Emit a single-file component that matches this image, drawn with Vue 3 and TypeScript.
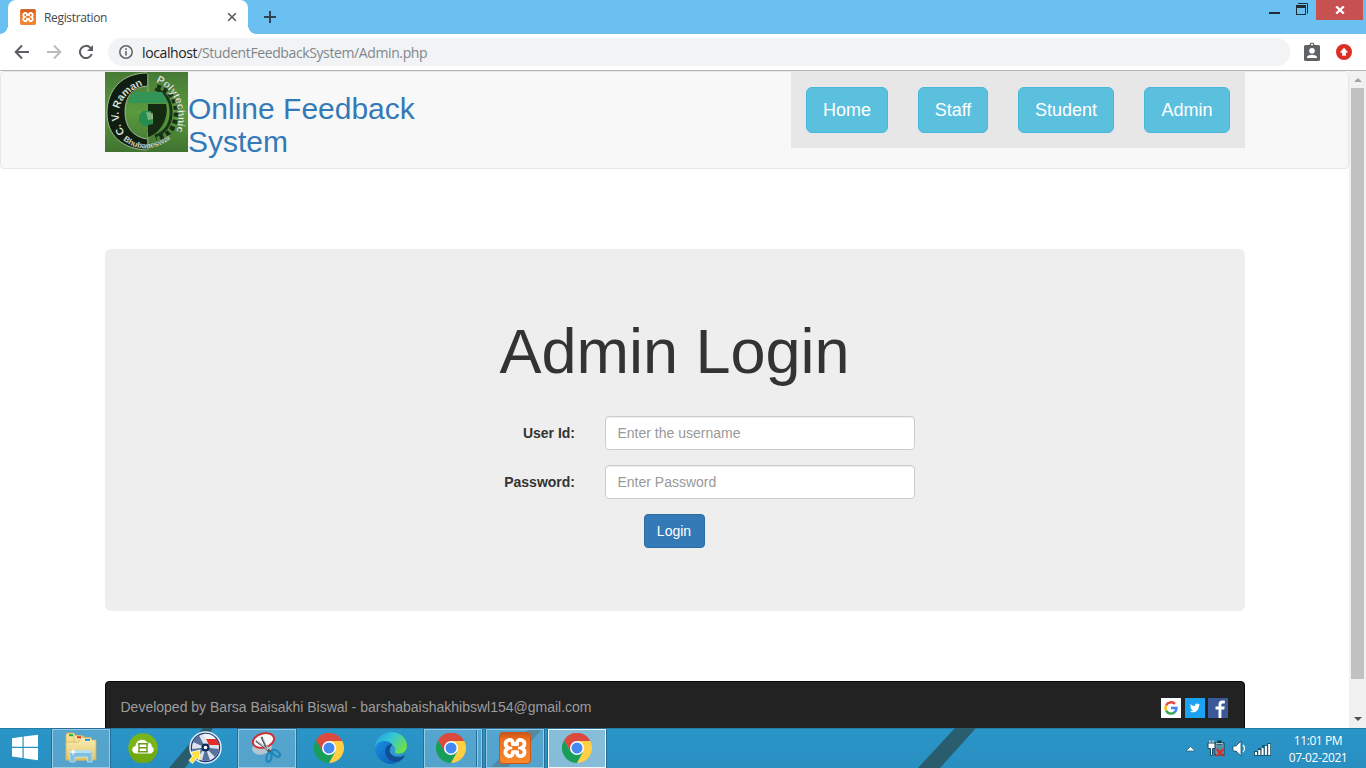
<script setup lang="ts">
interface NavItem { label: string; width: number }

const navItems: NavItem[] = [
  { label: 'Home', width: 82 },
  { label: 'Staff', width: 70 },
  { label: 'Student', width: 96 },
  { label: 'Admin', width: 86 },
]

interface TaskItem { icon: string; state: string }

const tasks: TaskItem[] = [
  { icon: 'folder', state: 'open' },
  { icon: 'cloud', state: '' },
  { icon: 'disc', state: '' },
  { icon: 'snip', state: 'open' },
  { icon: 'chrome', state: '' },
  { icon: 'edge', state: '' },
  { icon: 'chrome', state: 'open stacked' },
  { icon: 'xampp', state: 'open' },
  { icon: 'chrome', state: 'active' },
]
</script>

<template>
  <div class="screen">
    <svg class="defs" width="0" height="0">
      <defs>
        <linearGradient id="orange" x1="0" y1="0" x2="0" y2="1">
          <stop offset="0" stop-color="#c9551c" />
          <stop offset="0.25" stop-color="#f0701c" />
          <stop offset="1" stop-color="#f88a2c" />
        </linearGradient>
        <linearGradient id="paper" x1="0" y1="0" x2="0" y2="1">
          <stop offset="0" stop-color="#fbeeb4" />
          <stop offset="1" stop-color="#e5c566" />
        </linearGradient>
        <linearGradient id="edgeTop" x1="0" y1="0" x2="1" y2="0.6">
          <stop offset="0" stop-color="#1b9de2" />
          <stop offset="0.5" stop-color="#35c7d6" />
          <stop offset="1" stop-color="#6be04a" />
        </linearGradient>
        <linearGradient id="edgeLow" x1="0" y1="0" x2="1" y2="1">
          <stop offset="0" stop-color="#1a8fe0" />
          <stop offset="1" stop-color="#0a5cb8" />
        </linearGradient>
        <symbol id="xmark" viewBox="0 0 32 32">
          <rect x="0.5" y="0.5" width="31" height="31" rx="3.5" fill="url(#orange)" stroke="#c8561c" />
          <path d="M9.2 8.2C12.5 7.2 14.3 9 13.8 12.2H18.2C17.7 9 19.5 7.2 22.8 8.2 26.6 9.8 26.2 14.4 22.5 16 26.6 17.6 26.6 22.4 22.8 24 19.5 24.8 17.8 23 18.2 20H13.8C14.2 23 12.5 24.8 9.2 24 5.4 22.4 5.4 17.6 9.5 16 5.8 14.4 5.4 9.8 9.2 8.2z" fill="none" stroke="#fff" stroke-width="3.7" stroke-linejoin="round" />
          <path d="M9 16H13.2M19 16H23" stroke="#fff" stroke-width="2.4" />
        </symbol>
        <symbol id="chromemark" viewBox="0 0 30 30">
          <path d="M15 15 2 7.5A15 15 0 0 1 28 7.5L28 8H15z" fill="#dc4a3d" />
          <path d="M15 0A15 15 0 0 0 2 7.5L8.8 18.7 15 15V8h13A15 15 0 0 0 15 0z" fill="#dc4a3d" />
          <path d="M2 7.5A15 15 0 0 0 15 30L21.4 18.8 15 15 8.7 18.5z" fill="#199e5a" />
          <path d="M28.3 8H15l6.2 10.7L15 30A15 15 0 0 0 28.3 8z" fill="#ffcf44" />
          <circle cx="15" cy="15" r="7" fill="#fff" />
          <circle cx="15" cy="15" r="5.5" fill="#4688f1" />
        </symbol>
      </defs>
    </svg>

    <header class="tabstrip">
      <div class="tab">
        <svg class="favicon" width="16" height="16"><use href="#xmark" /></svg>
        <span class="tab-title">Registration</span>
        <svg class="tab-close" width="10" height="10" viewBox="0 0 10 10"><path d="M1.2 1.2 8.8 8.8M8.8 1.2 1.2 8.8" stroke="#56595d" stroke-width="1.6" /></svg>
      </div>
      <svg class="new-tab" width="12" height="12" viewBox="0 0 12 12"><path d="M6 0V12M0 6H12" stroke="#34424f" stroke-width="2" /></svg>
      <div class="win-controls">
        <svg width="42" height="20" viewBox="0 0 42 20">
          <path d="M2 13H13" stroke="#222b33" stroke-width="2" />
          <path d="M31 3.5H40.5V13.5" stroke="#222b33" fill="none" />
          <rect x="29.5" y="5.5" width="9" height="9" fill="none" stroke="#222b33" />
          <path d="M29 6.5H39" stroke="#222b33" stroke-width="3" />
        </svg>
        <div class="win-close">
          <svg width="10" height="8" viewBox="0 0 10 8"><path d="M1.2 .4 8.8 7.6M8.8 .4 1.2 7.6" stroke="#fff" stroke-width="2.2" /></svg>
        </div>
      </div>
    </header>

    <div class="toolbar">
      <svg class="tool" width="16" height="16" viewBox="0 0 16 16"><path d="M15 8H2M8 1.5 1.7 8 8 14.5" fill="none" stroke="#5b5e63" stroke-width="2" /></svg>
      <svg class="tool" width="16" height="16" viewBox="0 0 16 16"><path d="M1 8H14M8 1.5 14.3 8 8 14.5" fill="none" stroke="#b9bbbe" stroke-width="2" /></svg>
      <svg class="tool" width="16" height="16" viewBox="0 0 16 16"><path d="M13.8 10A6.1 6.1 0 1 1 12.4 3.7L14 5.3" fill="none" stroke="#5b5e63" stroke-width="2" /><path d="M15 1V7H9z" fill="#5b5e63" /></svg>
      <div class="omnibox">
        <svg width="14" height="14" viewBox="0 0 14 14"><circle cx="7" cy="7" r="6.2" fill="none" stroke="#5f6368" stroke-width="1.5" /><path d="M7 6V10.5M7 3.3V4.9" stroke="#5f6368" stroke-width="1.6" /></svg>
        <span class="url"><b>localhost</b>/StudentFeedbackSystem/Admin.php</span>
      </div>
      <svg class="badge" width="16" height="20" viewBox="0 0 16 20">
        <path d="M1.5 3H5.5C5.8-.3 10.2-.3 10.5 3H14.5Q16 3 16 4.5V17.5Q16 19 14.5 19H1.5Q0 19 0 17.5V4.5Q0 3 1.5 3z" fill="#5f6368" />
        <circle cx="8" cy="2.6" r="1" fill="#fff" /><circle cx="8" cy="8.7" r="2.8" fill="#fff" />
        <path d="M3 16V14.7Q4.2 12.7 8 12.7T13 14.7V16z" fill="#fff" />
      </svg>
      <svg class="update" width="16" height="16" viewBox="0 0 16 16"><circle cx="8" cy="8" r="8" fill="#d93025" /><path d="M8 3.7 12.2 8.4H9.9V11.8H6.1V8.4H3.8z" fill="#fff" /></svg>
    </div>

    <div class="viewport">
      <main class="page">
        <nav class="navbar">
          <div class="brand">
            <svg class="crest" width="83" height="80" viewBox="0 0 83 80">
              <defs>
                <path id="arcLeft" d="M20 61C8 44 12 22 41 12" />
                <path id="arcRight" d="M51 10C68 16 79 38 70 63" />
                <path id="arcBottom" d="M18 68Q42 87 71 63" />
                <linearGradient id="grass" x1="0" y1="0" x2="0" y2="1"><stop offset="0" stop-color="#467a35" /><stop offset="0.5" stop-color="#5b9a3e" /><stop offset="1" stop-color="#3f7330" /></linearGradient>
              </defs>
              <rect width="83" height="80" fill="url(#grass)" />
              <path d="M42 1C17 1 2 18 2 41S18 77 42 78V67C28 65 20 55 20 40S29 15 42 14z" fill="#101d11" />
              <path d="M42 1C17 1 2 18 2 41S18 77 42 78" fill="none" stroke="#a1bc91" />
              <path d="M42 14C27 15 20 25 20 40S28 65 42 67" fill="none" stroke="#b8cbae" stroke-width=".8" />
              <path d="M43 2V20M43 61V78" stroke="#a8bf96" stroke-width=".7" />
              <path d="M52 15C64 17 73 29 71 44S62 64 51 66" fill="none" stroke="#1a3013" stroke-width="5" stroke-dasharray="4 3" />
              <path d="M50 17C62 21 67 31 66 43S59 61 50 64" fill="none" stroke="#183317" stroke-width="3" />
              <path d="M23 31Q25 25 29 20H57Q61 25 63 31z" fill="#329457" />
              <path d="M43 32H61C64 43 58 60 43 65z" fill="#142b11" />
              <path d="M43 43H48V52H43z" fill="#6b983e" />
              <path d="M34 43 38 39H46L48 52 39 54 34 50z" fill="#268d52" />
              <path d="M41 40 48 41 48 47 43 48z" fill="#b6c8a0" opacity=".6" />
              <text class="crest-text large"><textPath href="#arcLeft">C. V. Raman</textPath></text>
              <text class="crest-text right"><textPath href="#arcRight">Polytechnic</textPath></text>
              <text class="crest-text small"><textPath href="#arcBottom">Bhubaneswar</textPath></text>
            </svg>
            <h2>Online Feedback<br />System</h2>
          </div>
          <div class="menu">
            <button v-for="item in navItems" :key="item.label" type="button" :style="{ width: item.width + 'px' }">{{ item.label }}</button>
          </div>
        </nav>

        <section class="jumbotron">
          <h1>Admin Login</h1>
          <form @submit.prevent>
            <div class="row"><label for="user">User Id:</label><input id="user" type="text" placeholder="Enter the username" /></div>
            <div class="row"><label for="pass">Password:</label><input id="pass" type="password" placeholder="Enter Password" /></div>
            <button class="login" type="submit">Login</button>
          </form>
        </section>

        <footer class="footer">
          <p>Developed by Barsa Baisakhi Biswal - barshabaishakhibswl154@gmail.com</p>
          <div class="social">
            <svg width="20" height="20" viewBox="0 0 20 20"><rect width="20" height="20" fill="#fff" />
              <path d="M5.1 7.4A5.6 5.6 0 0 1 14 5.8" fill="none" stroke="#ea4335" stroke-width="2.4" />
              <path d="M5.1 7.4A5.6 5.6 0 0 0 5.1 12.6" fill="none" stroke="#fbbc05" stroke-width="2.4" />
              <path d="M5.1 12.6A5.6 5.6 0 0 0 13.6 14.3" fill="none" stroke="#34a853" stroke-width="2.4" />
              <path d="M10 10H15.5A5.6 5.6 0 0 1 13.6 14.3" fill="none" stroke="#4285f4" stroke-width="2.4" />
            </svg>
            <svg class="bird" width="20" height="20" viewBox="0 0 20 20"><rect width="20" height="20" fill="#1da1f2" /><path d="M15 6.9 13.9 7.9C13.9 12.7 9.1 16.1 5 13.4 6.5 13.5 7.4 13.1 8.1 12.5 7 12.4 6.4 11.8 6.1 11H7C5.9 10.5 5.4 9.6 5.4 8.6L6.3 8.8C5.3 8 5.2 6.9 5.7 5.9 6.9 7.2 8.2 8 9.9 8.1 9.5 5.8 11.9 4.8 13.3 6.2L14.7 5.7 14 6.8z" fill="#fff" /></svg>
            <svg width="20" height="20" viewBox="0 0 20 20"><rect width="20" height="20" fill="#3b5998" /><path d="M10.5 20V11.6H7.5V8.4H10.5V6.3C10.5 3.8 12 2.5 14.3 2.5H16.8V5.5H15C13.7 5.5 13.4 6.1 13.4 7V8.4H16.7L16.2 11.6H13.4V20z" fill="#fff" /></svg>
          </div>
        </footer>
      </main>
      <div class="scrollbar">
        <svg width="17" height="17" viewBox="0 0 17 17"><path d="M5 11 9 7 13 11z" fill="#a3a3a3" /></svg>
        <div class="thumb"></div>
        <svg width="17" height="17" viewBox="0 0 17 17"><path d="M5 6 9 10 13 6z" fill="#505050" /></svg>
      </div>
    </div>

    <div class="taskbar">
      <svg class="stripes" width="1366" height="40" viewBox="0 0 1366 40"><path d="M203 0H213L185 40H169zM530 0H543L507 40H490zM955 0H976L940 40H918z" fill="#295864" opacity=".9" /></svg>
      <div class="start">
        <svg width="28" height="27" viewBox="0 0 28 27"><path d="M1 4.2 11.5 2.8V12.8H1zM12.7 2.6 27 .7V12.8H12.7zM1 14H11.5V24L1 22.5zM12.7 14H27V26.3L12.7 24.2z" fill="#fff" /></svg>
      </div>
      <div v-for="(task, i) in tasks" :key="i" class="task" :class="task.state">
        <svg v-if="task.icon === 'folder'" width="34" height="32" viewBox="0 0 34 32">
          <path d="M2 3Q2 1 4 1H10L12 4H20V28H2z" fill="#f6df92" stroke="#cfae58" stroke-width=".8" />
          <rect x="5" y="2.2" width="4" height="2" fill="#18ae43" />
          <path d="M10 3.5H17L19 5.5H27V28H10z" fill="#f7e29a" stroke="#d6ba6c" stroke-width=".8" />
          <rect x="13" y="4.2" width="4" height="2" fill="#db3b31" />
          <path d="M18 5.5H26L28 8H32V27Q32 28 31 28H3Q2 28 2 27V11Q2 10 3 10H14z" fill="url(#paper)" stroke="#ccb164" stroke-width=".8" />
          <rect x="21" y="6.8" width="5" height="2" fill="#258be8" />
          <path d="M6 30V20.5Q6 18.5 8 18.5H26Q28 18.5 28 20.5V30H23.5V25H11V30z" fill="#7fc0e2" stroke="#b9e2f2" stroke-width=".8" />
          <path d="M7 20H27" stroke="#c5ecfa" stroke-width="1.5" />
          <path d="M9 16 9.8 19.2 13 20 9.8 20.8 9 24 8.2 20.8 5 20 8.2 19.2z" fill="#fff" />
        </svg>
        <svg v-else-if="task.icon === 'cloud'" width="30" height="30" viewBox="0 0 30 30">
          <circle cx="15" cy="15" r="14.8" fill="#79b518" /><path d="M1 17A14 14 0 0 0 29 17Q15 24 1 17z" fill="#6ba40e" opacity=".6" />
          <path d="M8.5 20.5C3 20.5 3 13.5 7.6 13 8 6.3 16.5 4.7 19.5 9.7 23 9.5 24 11.8 23.6 13.6 27 15.3 26 20.5 22.2 20.5z" fill="#fff" />
          <path d="M11 10.8H19V18.7H11zM11 14.7H19M9.8 10.8H20.2M9.8 18.7H20.2" fill="none" stroke="#6f9a1c" stroke-width="1.4" />
        </svg>
        <svg v-else-if="task.icon === 'disc'" width="34" height="34" viewBox="0 0 34 34">
          <circle cx="17.5" cy="16.5" r="15.5" fill="#173d7b" stroke="#e5ebf2" stroke-width="1.5" />
          <circle cx="17.5" cy="16.5" r="13.5" fill="#dde3eb" />
          <path d="M17.5 16.5 5 11A13.5 13.5 0 0 1 11 4.6zM17.5 16.5 4 18A13.5 13.5 0 0 0 9 27zM17.5 16.5 14 29.5A13.5 13.5 0 0 0 22 29.2zM17.5 16.5 27 26A13.5 13.5 0 0 0 31 18z" fill="#56729d" />
          <path d="M18 8H28Q31 11 31 14H21z" fill="#e42c28" /><path d="M15 3A14 14 0 0 1 28 8H18z" fill="#f2f4f7" />
          <circle cx="17.5" cy="16.5" r="4" fill="#102a56" /><circle cx="17.5" cy="16.5" r="1.8" fill="#fff" />
          <path d="M12 19 2.5 21.3 5.5 24 1 29.5 4.5 32.4 8.7 27 11 29.5z" fill="#ffe13a" stroke="#fff" stroke-width=".8" />
        </svg>
        <svg v-else-if="task.icon === 'snip'" width="32" height="32" viewBox="0 0 32 32">
          <ellipse cx="11" cy="16" rx="10" ry="6.5" fill="#b5c5d0" transform="rotate(-12 11 16)" />
          <ellipse cx="12.5" cy="8.5" rx="10.8" ry="7" fill="#f5f7f9" stroke="#d8292b" stroke-width="1.9" transform="rotate(-16 12.5 8.5)" />
          <path d="M10.5 5 16.5 18 19 21M5 9 17 18 21 20" fill="none" stroke="#4e565e" stroke-width="2" />
          <path d="M6 9 17 18M12 6 17 17" stroke="#d3d9df" stroke-width="1" />
          <ellipse cx="18" cy="25.3" rx="2.4" ry="4.6" fill="none" stroke="#2087bb" stroke-width="2.2" transform="rotate(12 18 25.3)" />
          <ellipse cx="25" cy="21.2" rx="2.4" ry="4.6" fill="none" stroke="#2087bb" stroke-width="2.2" transform="rotate(-52 25 21.2)" />
        </svg>
        <svg v-else-if="task.icon === 'edge'" width="32" height="32" viewBox="0 0 32 32">
          <path d="M0 17C0 5 9 0 16 0 25 0 32 6 32 14 32 21 24 24 19.5 20.5 22 16 16 8 8 10 4 11 1 14 0 17z" fill="url(#edgeTop)" />
          <path d="M0 16C2 8 12 7 17 12 12 12 10 16 10.5 20 11 27 17 31 22 31 10 35 0 26 0 16z" fill="url(#edgeLow)" />
          <path d="M17 12C12 12 9 16 10.5 22 13 30 21 32 25 29 28 27 30 24 30 23 23 27 16 24 15 19 14.5 16 17 15 17 12z" fill="#104f96" />
          <path d="M15.5 15.5C17 12 21 14 20 18 18 21 22 23 27 21 22 27 12 23 15.5 15.5z" fill="#3299ce" />
        </svg>
        <svg v-else-if="task.icon === 'xampp'" width="32" height="32"><use href="#xmark" /></svg>
        <svg v-else width="30" height="30"><use href="#chromemark" /></svg>
      </div>
      <div class="tray">
        <svg width="92" height="24" viewBox="0 0 92 24">
          <path d="M5 14 9.5 9.5 14 14z" fill="#fff" stroke="#255f78" stroke-width=".7" />
          <path d="M34.5 6.5H42.5V17.5H34.5zM36.5 4.5H40.5" fill="#4b91ad" stroke="#173b4b" stroke-width="2" />
          <path d="M35 6.5H42V17H35z" fill="none" stroke="#a9c5cd" />
          <path d="M27 6H34V11.5H31.5V18.5H29.5V11.5H27zM29 2.5V6M32 2.5V6" fill="#fff" stroke="#1a475a" stroke-width="1" />
          <path d="M29 3V6M32 3V6" stroke="#fff" stroke-width="1" />
          <path d="M35.5 12 42.5 19M42.5 12 35.5 19" stroke="#db2c2b" stroke-width="2.2" />
          <path d="M52 9H55L60 4V19L55 14H52z" fill="#fff" stroke="#204d60" stroke-width=".8" />
          <path d="M62 8Q65 11.5 62 15" fill="none" stroke="#fff" stroke-width="1.2" />
          <path d="M73 14H90V19H73zM77 11H90V15H77zM81 8H90V12H81zM86 6H90V10H86z" fill="#1b5871" />
          <path d="M74 15H76V18H74zM77.3 13H79.3V18H77.3zM80.6 11H82.6V18H80.6zM83.9 9H85.9V18H83.9zM87.2 7H89.2V18H87.2z" fill="#fff" />
        </svg>
        <div class="clock"><span>11:01 PM</span><span>07-02-2021</span></div>
      </div>
    </div>
  </div>
</template>

<style>
body { margin: 0; overflow: hidden; }
</style>

<style scoped>
* { box-sizing: border-box; }
svg { display: block; flex: none; }
.defs { position: absolute; }
.screen { width: 1366px; height: 768px; display: flex; flex-direction: column; overflow: hidden; background: #fff; font-family: "Liberation Sans", Arial, sans-serif; font-size: 14px; color: #333; }
.tabstrip { height: 34px; flex: none; display: flex; background: #69c0f1; font-family: "Open Sans", "Noto Sans", sans-serif; }
.tab { width: 240px; height: 34px; margin-left: 8px; padding: 0 11px 0 12px; display: flex; align-items: center; background: #fff; border-radius: 8px 8px 0 0; position: relative; }
.tab::before, .tab::after { content: ""; position: absolute; bottom: 0; width: 8px; height: 8px; }
.tab::before { left: -8px; background: radial-gradient(circle at 0 0, transparent 7.5px, #fff 8px); }
.tab::after { right: -8px; background: radial-gradient(circle at 100% 0, transparent 7.5px, #fff 8px); }
.tab-title { margin-left: 8px; flex: 1; font-size: 12px; letter-spacing: -.34px; color: #45484c; }
.new-tab { margin: 11px 0 0 16px; }
.win-controls { margin-left: auto; display: flex; }
.win-close { width: 47px; height: 20px; margin: 0 3px 0 7px; background: #c75050; display: flex; align-items: center; justify-content: center; }
.toolbar { height: 37px; flex: none; border-bottom: 1px solid #b5b5b5; display: flex; align-items: center; padding: 0 14px 0 14px; background: #fff; }
.tool { margin-right: 16px; }
.omnibox { width: 1182px; height: 28px; margin-left: -2px; border-radius: 14px; background: #f1f3f4; display: flex; align-items: center; padding-left: 11px; }
.url { margin-left: 9px; font: 14px "Open Sans", "Noto Sans", sans-serif; letter-spacing: -.39px; color: #80868b; white-space: nowrap; }
.url b { font-weight: 400; color: #202124; }
.badge { margin: 0 16px 0 14px; }
.viewport { height: 657px; flex: none; display: flex; overflow: hidden; }
.page { width: 1349px; height: 657px; overflow: hidden; }
.navbar { height: 98px; border: 1px solid #e7e7e7; border-radius: 4px; background: #f8f8f8; display: flex; justify-content: space-between; padding: 0 103px 0 104px; }
.brand { display: flex; }
.brand h2 { margin: 20px 0 0; font-size: 30px; line-height: 33px; font-weight: 500; color: #337ab7; }
.crest-text { font-family: "Liberation Sans", Arial, sans-serif; font-weight: 700; fill: #eef3e8; stroke: #22391d; stroke-width: .2px; }
.large { font-size: 10.5px; }
.right { font-size: 10.5px; }
.small { font-size: 8px; }
.menu { height: 76px; width: 454px; background: #e7e7e7; display: flex; gap: 30px; padding: 15px; }
.menu button { height: 46px; flex: none; padding: 0; border: 1px solid #46b8da; border-radius: 6px; background: #5bc0de; color: #fff; font: 18px "Liberation Sans", Arial, sans-serif; }
.jumbotron { width: 1140px; height: 362px; margin: 80px 0 0 105px; padding-top: 68px; border-radius: 6px; background: #eee; display: flex; flex-direction: column; align-items: center; }
.jumbotron h1 { margin: 0; height: 99px; font-size: 63px; font-weight: 500; line-height: 69px; transform: translateX(-.5px); }
form { width: 480px; display: flex; flex-direction: column; align-items: center; }
.row { width: 480px; height: 34px; margin-bottom: 15px; display: flex; align-items: center; }
.row label { width: 140px; text-align: right; font-weight: 700; }
.row input { width: 310px; height: 34px; margin-left: 30px; padding: 6px 11.5px; border: 1px solid #ccc; border-radius: 4px; box-shadow: inset 0 1px 1px rgba(0,0,0,.075); background: #fff; font: 14px "Liberation Sans", Arial, sans-serif; }
.row input::placeholder { color: #999; opacity: 1; }
.login { width: 61px; height: 34px; margin-right: 2px; padding: 0; border: 1px solid #2e6da4; border-radius: 4px; background: #337ab7; color: #fff; font: 14px "Liberation Sans", Arial, sans-serif; }
.footer { width: 1140px; height: 52px; margin: 70px 0 0 105px; padding: 15px 16px 0 14.5px; border: 1px solid #080808; border-radius: 4px 4px 0 0; background: #222; color: #9d9d9d; display: flex; justify-content: space-between; }
.footer p { margin: 0; line-height: 20px; }
.social { display: flex; padding-top: 1px; }
.bird { margin: 0 3px 0 4px; }
.scrollbar { width: 17px; height: 657px; background: #f1f1f1; display: flex; flex-direction: column; }
.thumb { width: 13px; height: 591px; margin: 0 2px auto; background: #c1c1c1; }
.taskbar { height: 40px; flex: none; position: relative; display: flex; gap: 4px; background: linear-gradient(#2a95c8, #298fc1); border-top: 1px solid #247ca8; }
.stripes { position: absolute; left: 0; top: -1px; }
.start { width: 48px; padding: 0 0 2px 2px; display: flex; align-items: center; justify-content: center; position: relative; }
.task { width: 58px; height: 39px; padding-bottom: 1px; display: flex; align-items: center; justify-content: center; position: relative; }
.task.open { border: 1px solid #9ac9e2; outline: 1px solid #246e99; outline-offset: 0; background: rgba(132,184,216,.48); }
.task.active { border: 1px solid #eef8ff; outline: 1px solid #246e99; background: rgba(170,205,224,.72); }
.task.stacked { padding-right: 4px; }
.task.stacked::after { content: ""; position: absolute; right: 3px; top: 0; height: 37px; border-left: 1px solid #246e99; border-right: 1px solid #9ac9e2; }
.tray { margin-left: auto; display: flex; align-items: center; position: relative; }
.clock { width: 70px; margin: 0 13px 0 10px; display: flex; flex-direction: column; align-items: center; color: #fff; font: 12px/17px "Open Sans", "Noto Sans", sans-serif; letter-spacing: -.4px; white-space: nowrap; }
</style>
